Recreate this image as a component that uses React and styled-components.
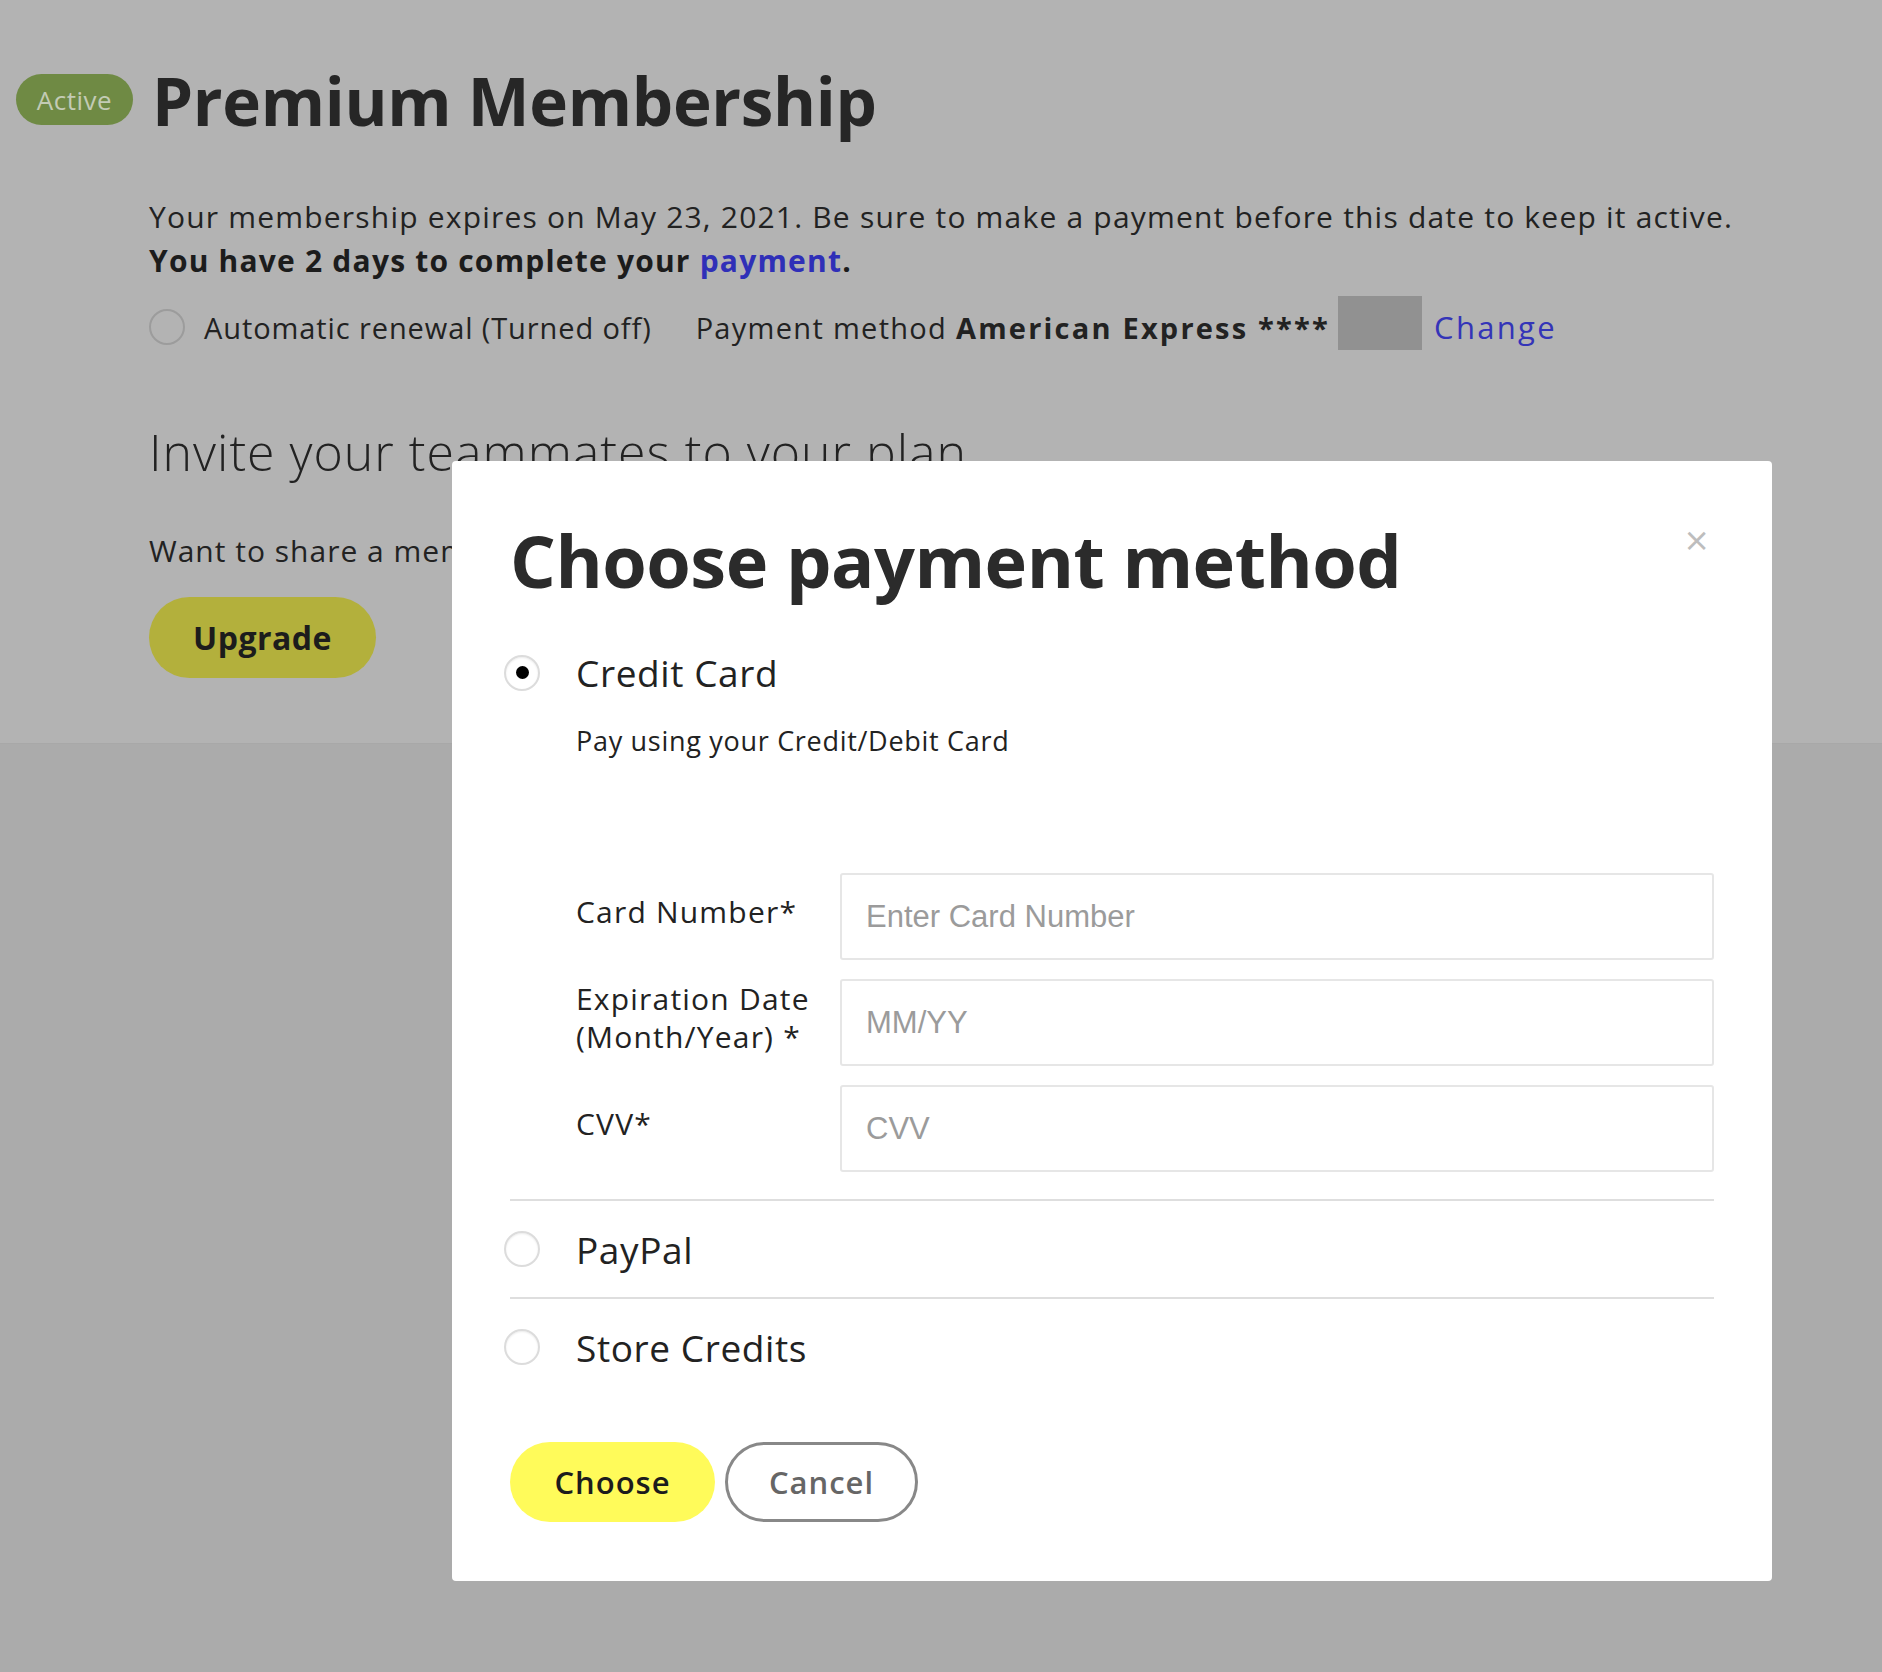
import React from "react";
import styled, { createGlobalStyle } from "styled-components";

const GlobalStyle = createGlobalStyle`
  body {
    margin: 0;
    background: #ababab;
    font-family: "Open Sans", "DejaVu Sans", sans-serif;
    color: #222;
  }
`;

function Radio({ checked, ghost }) {
  return <RadioCircle ghost={ghost}>{checked && <span />}</RadioCircle>;
}

function App() {
  return (
    <Page>
      <GlobalStyle />
      <Header>
        <TitleRow>
          <Badge>Active</Badge>
          <h1>Premium Membership</h1>
        </TitleRow>
        <Content>
          <Notice>
            Your membership expires on May 23, 2021. Be sure to make a payment
            before this date to keep it active.
            <br />
            <strong>
              You have 2 days to complete your <a href="#">payment</a>.
            </strong>
          </Notice>
          <RenewRow>
            <Radio ghost />
            <span className="renew">Automatic renewal (Turned off)</span>
            <span className="method">
              Payment method <b>American Express ****</b>
            </span>
            <Masked />
            <ChangeLink href="#">Change</ChangeLink>
          </RenewRow>
          <h2>Invite your teammates to your plan</h2>
          <p className="share">
            Want to share a membership with your team? Upgrade your plan.
          </p>
          <UpgradeButton>Upgrade</UpgradeButton>
        </Content>
      </Header>

      <Modal>
        <CloseButton aria-label="close">×</CloseButton>
        <ModalTitle>Choose payment method</ModalTitle>

        <Option>
          <Radio checked />
          <span>Credit Card</span>
        </Option>
        <OptionNote>Pay using your Credit/Debit Card</OptionNote>

        <Fields>
          <FieldRow>
            <label>Card Number*</label>
            <Input placeholder="Enter Card Number" />
          </FieldRow>
          <FieldRow>
            <label>
              Expiration Date
              <br />
              (Month/Year) *
            </label>
            <Input placeholder="MM/YY" />
          </FieldRow>
          <FieldRow>
            <label>CVV*</label>
            <Input placeholder="CVV" />
          </FieldRow>
        </Fields>

        <Divider />
        <Option compact>
          <Radio />
          <span>PayPal</span>
        </Option>
        <Divider />
        <Option compact>
          <Radio />
          <span>Store Credits</span>
        </Option>

        <Actions>
          <ChooseButton>Choose</ChooseButton>
          <CancelButton>Cancel</CancelButton>
        </Actions>
      </Modal>
    </Page>
  );
}

const Page = styled.div`
  position: relative;
  min-height: 1672px;
  background: #ababab;
`;

const Header = styled.div`
  height: 744px;
  box-sizing: border-box;
  background: #b3b3b3;
  border-bottom: 1px solid #a8a8a8;
  padding: 56px 0 0 16px;
`;

const TitleRow = styled.div`
  display: flex;
  align-items: center;
  gap: 19px;

  h1 {
    margin: 0;
    font-size: 65.5px;
    font-weight: 700;
    color: #262626;
    letter-spacing: -0.3px;
  }
`;

const Badge = styled.span`
  display: inline-flex;
  align-items: center;
  justify-content: center;
  width: 117px;
  height: 51px;
  border-radius: 26px;
  background: #6f8a44;
  color: #c3cbb5;
  font-size: 26px;
  letter-spacing: 0.5px;
  margin-top: -2px;
`;

const Content = styled.div`
  padding-left: 133px;

  h2 {
    margin: 68px 0 0;
    font-size: 50px;
    font-weight: 300;
    letter-spacing: 1px;
    color: #222;
  }

  .share {
    margin: 44px 0 0;
    font-size: 30px;
    letter-spacing: 1px;
    color: #222;
  }
`;

const Notice = styled.p`
  margin: 50px 0 0;
  font-size: 30px;
  letter-spacing: 1.2px;
  line-height: 44px;
  color: #222;

  strong {
    font-weight: 700;
    color: #1c1c1c;
  }

  a {
    color: #2f2fb8;
    text-decoration: none;
  }
`;

const RenewRow = styled.div`
  display: flex;
  align-items: center;
  margin-top: 21px;
  font-size: 29px;
  color: #222;

  .renew {
    margin-left: 19px;
    letter-spacing: 0.9px;
  }

  .method {
    margin-left: 44px;
    letter-spacing: 1.3px;
  }

  b {
    font-weight: 700;
    letter-spacing: 2.2px;
  }
`;

const Masked = styled.span`
  width: 84px;
  height: 54px;
  margin: -8px 0 0 8px;
  background: #919191;
`;

const ChangeLink = styled.a`
  margin-left: 12px;
  color: #3434b8;
  font-size: 31px;
  letter-spacing: 2.3px;
  text-decoration: none;
`;

const UpgradeButton = styled.button`
  margin-top: 26px;
  width: 227px;
  height: 81px;
  border: none;
  border-radius: 41px;
  background: #b3b03c;
  color: #1c1c1c;
  font-family: inherit;
  font-size: 32px;
  font-weight: 700;
  letter-spacing: 0.5px;
`;

const Modal = styled.div`
  position: absolute;
  top: 461px;
  left: 452px;
  width: 1320px;
  height: 1120px;
  box-sizing: border-box;
  padding: 50px 58px 0;
  background: #fff;
  border-radius: 4px;
  display: flex;
  flex-direction: column;
`;

const CloseButton = styled.button`
  position: absolute;
  top: 60px;
  right: 62px;
  border: none;
  background: none;
  color: #bdbdbd;
  font-family: "DejaVu Sans", sans-serif;
  font-size: 32px;
  padding: 0;
`;

const ModalTitle = styled.h3`
  margin: 0;
  font-size: 72px;
  font-weight: 700;
  color: #2b2b2b;
  letter-spacing: -0.5px;
`;

const RadioCircle = styled.span`
  flex: none;
  width: 36px;
  height: 36px;
  box-sizing: border-box;
  border-radius: 50%;
  border: 2px solid ${(p) => (p.ghost ? "#9c9c9c" : "#dcdcdc")};
  background: ${(p) => (p.ghost ? "transparent" : "#fff")};
  box-shadow: ${(p) => (p.ghost ? "none" : "inset 0 1px 2px rgba(0,0,0,0.08)")};
  display: inline-flex;
  align-items: center;
  justify-content: center;

  span {
    width: 13px;
    height: 13px;
    border-radius: 50%;
    background: #000;
  }
`;

const Option = styled.div`
  display: flex;
  align-items: center;
  gap: 36px;
  margin-left: -6px;
  height: ${(p) => (p.compact ? "96px" : "auto")};
  margin-top: ${(p) => (p.compact ? "0" : "38px")};
  font-size: 37px;
  letter-spacing: 0.6px;
  color: #222;
`;

const OptionNote = styled.p`
  margin: 24px 0 0 66px;
  font-size: 27px;
  letter-spacing: 0.7px;
  color: #222;
`;

const Fields = styled.div`
  display: flex;
  flex-direction: column;
  gap: 19px;
  margin: 114px 0 27px 66px;
`;

const FieldRow = styled.div`
  display: grid;
  grid-template-columns: 264px 1fr;
  align-items: center;

  label {
    font-size: 30px;
    letter-spacing: 1.2px;
    line-height: 38px;
    color: #222;
    margin-top: -10px;
  }
`;

const Input = styled.input`
  height: 87px;
  box-sizing: border-box;
  border: 2px solid #e6e6e6;
  border-radius: 3px;
  padding: 0 24px;
  font-family: "Liberation Sans", Arial, sans-serif;
  font-size: 31px;
  color: #333;

  &::placeholder {
    color: #9b9b9b;
  }
`;

const Divider = styled.hr`
  margin: 0;
  border: none;
  border-top: 2px solid #dedede;
`;

const Actions = styled.div`
  display: flex;
  gap: 10px;
  margin-top: 47px;
`;

const ChooseButton = styled.button`
  width: 205px;
  height: 80px;
  border: none;
  border-radius: 40px;
  background: #fffb5a;
  color: #1c1c1c;
  font-family: inherit;
  font-size: 31px;
  font-weight: 600;
  letter-spacing: 1px;
`;

const CancelButton = styled.button`
  width: 193px;
  height: 80px;
  border: 3px solid #888;
  border-radius: 40px;
  background: #fff;
  color: #666;
  font-family: inherit;
  font-size: 31px;
  font-weight: 600;
  letter-spacing: 1px;
`;

export default App;
